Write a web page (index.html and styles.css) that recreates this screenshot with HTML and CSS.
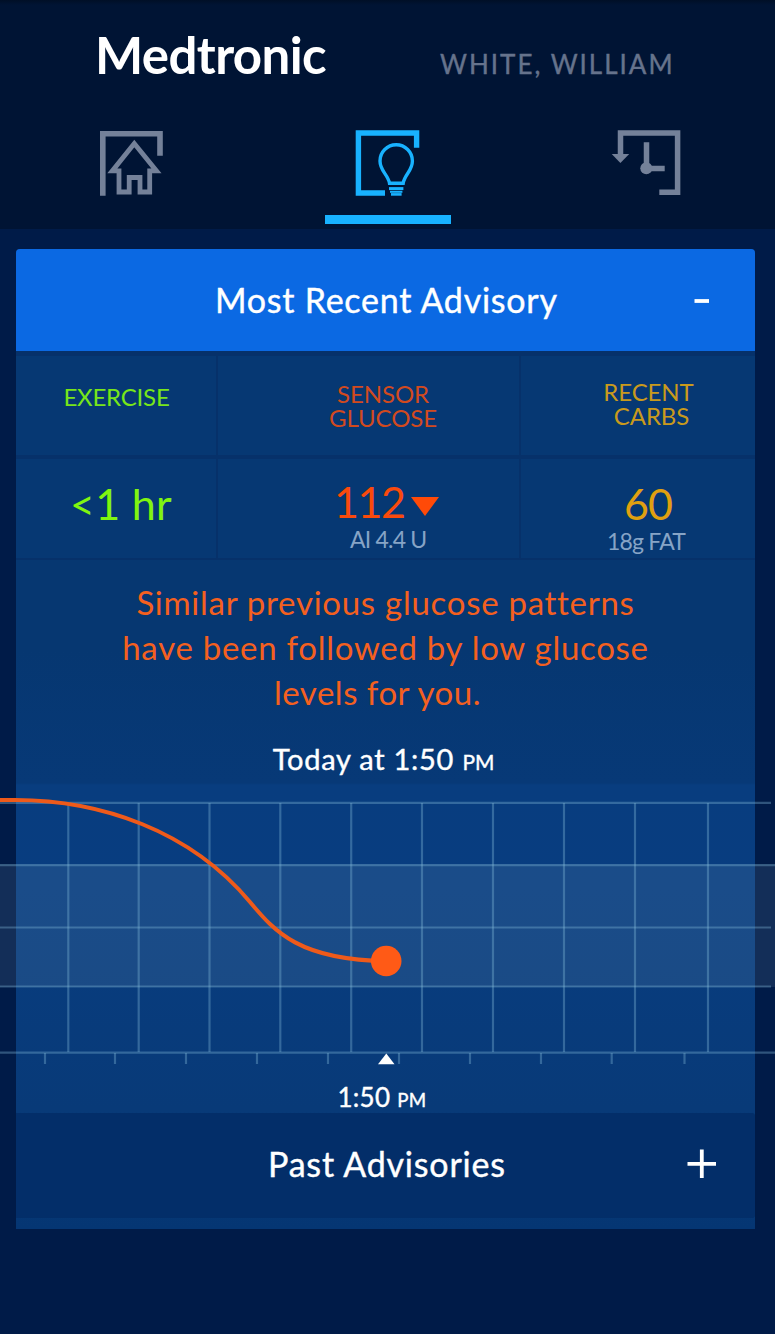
FILE: index.html
```html
<!DOCTYPE html>
<html lang="en">
<head>
<meta charset="utf-8">
<title>Medtronic – Most Recent Advisory</title>
<link rel="stylesheet" href="styles.css">
</head>
<body>
<header class="top">
  <div class="brand-row">
    <div class="brand"><span class="t">Medtronic</span></div>
    <div class="patient"><span class="t">WHITE, WILLIAM</span></div>
  </div>
  <nav class="tabs">
    <a class="tab tab-home">
      <svg width="66" height="70" viewBox="99 128 66 70" fill="none" stroke="currentColor">
        <path stroke-width="5.6" d="M102.8 195.7V133.7H160V155.7"/>
        <path stroke-width="4.8" d="M134.3 143.6L112.3 170.9H119V192H129.2V177.5H140V192H149.7V170.9H156.5Z"/>
      </svg>
    </a>
    <a class="tab tab-advice active">
      <svg width="68" height="70" viewBox="354 128 68 70" fill="none" stroke="currentColor">
        <path stroke-width="5.4" d="M416.6 147.7V133H358.4V193H385"/>
        <path stroke-width="3.4" d="M389.5 183.2C388 174.500 380 171 380 161A16.200 16.200 0 0 1 412.400 161C412.400 171 404.500 174.500 403.200 183.200Z"/>
        <path stroke-width="3" d="M389 188.600H403.400"/>
        <path stroke-width="2" d="M390 191.800H402.400"/>
        <path stroke-width="2.600" d="M391 194.400H401.600"/>
      </svg>
    </a>
    <a class="tab tab-history">
      <svg width="72" height="70" viewBox="611 128 72 70" fill="none" stroke="currentColor">
        <path stroke-width="5.5" d="M620.5 156V133.1H677.6V192.3H659.3M646.500 142.300V168.400H664.700"/>
        <path fill="currentColor" stroke="none" d="M611.700 154H629.200L620.400 163Z"/>
        <circle fill="currentColor" stroke="none" cx="646.300" cy="168.200" r="6"/>
      </svg>
    </a>
  </nav>
</header>

<main class="card">
  <section class="bar bar-open">
    <h1 class="bar-title"><span class="t">Most Recent Advisory</span></h1>
    <svg class="sign" width="30" height="30" viewBox="0 0 30 30"><path d="M8.500 16H23" stroke="#fff" stroke-width="3.800"/></svg>
  </section>

  <section class="stats">
    <div class="cell label green"><span class="t">EXERCISE</span></div>
    <div class="cell label red"><span class="t">SENSOR</span><span class="t glucose">GLUCOSE</span></div>
    <div class="cell label gold"><span class="t">RECENT</span><span class="t carbs">CARBS</span></div>
    <div class="cell value green"><div class="num hours"><span class="t">&lt;1 hr</span></div></div>
    <div class="cell value red">
      <div class="num level"><span class="t">112</span><svg width="28" height="19" viewBox="0 0 28 19"><path d="M0 0H28L14 19Z" fill="#ff4a08"/></svg></div>
      <div class="sub insulin"><span class="t">AI 4.4 U</span></div>
    </div>
    <div class="cell value gold">
      <div class="num grams"><span class="t">60</span></div>
      <div class="sub fat"><span class="t">18g FAT</span></div>
    </div>
  </section>

  <section class="message">
    <p class="advice"><span class="t">Similar previous glucose patterns</span><br><span class="t">have been followed by low glucose</span><br><span class="t last">levels for you.</span></p>
    <p class="when"><span class="t">Today at 1:50 <small>PM</small></span></p>
  </section>

  <section class="chart">
    <svg width="775" height="276" viewBox="0 790 775 276">
      <rect x="0" y="864.500" width="775" height="122.500" fill="#96b9c8" fill-opacity=".125"/>
      <g class="grid">
        <path d="M0 802.800H771M0 865.200H775M0 927.500H771M0 986.500H771M0 1052.600H775"/>
        <path d="M68.300 803V1052M138.700 803V1052M209.500 803V1052M280.300 803V1052M351.200 803V1052M422 803V1052M493 803V1052M564 803V1052M635 803V1052M708 803V1052"/>
        <path d="M45 1053V1064M115 1053V1064M186 1053V1064M257 1053V1064M328 1053V1064M399 1053V1064M470 1053V1064M541 1053V1064M611.700 1053V1064M684.500 1053V1064"/>
      </g>
      <path class="trend" d="M0 800H15C100 800 190 830 250 902C275 932 300 960 386 961"/>
      <circle cx="386.200" cy="961" r="15.300" fill="#ff5a16"/>
      <path d="M386.300 1053.500L394.500 1064.200H378Z" fill="#fff"/>
    </svg>
    <p class="axis"><span class="t">1:50 <small>PM</small></span></p>
  </section>

  <section class="bar bar-past">
    <h2 class="bar-title"><span class="t">Past Advisories</span></h2>
    <svg class="sign" width="30" height="30" viewBox="0 0 30 30"><path d="M.500 14.800H29M14.800 .500V29" stroke="#fff" stroke-width="3.800"/></svg>
  </section>
</main>
</body>
</html>
```
FILE: styles.css
```css
* { box-sizing: border-box; }
body {
  margin: 0;
  width: 775px;
  height: 1334px;
  overflow: hidden;
  background: #001b48;
  font-family: Lato, "Open Sans", sans-serif;
  color: #fff;
}
p, h1, h2 { margin: 0; font-weight: 400; }
svg { display: block; flex: none; }
.t { display: inline-block; white-space: nowrap; }

/* Header */
.top {
  height: 229px;
  padding-top: 25px;
  background: linear-gradient(#000f26 0, #001434 5px);
}
.brand-row { display: flex; align-items: baseline; height: 103px; padding-left: 95px; }
.brand { width: 345px; font-size: 51px; line-height: 60px; font-weight: 700; letter-spacing: -0.6px; }
.patient { font-size: 26px; letter-spacing: 2px; color: #66738c; -webkit-text-stroke: 0.4px #66738c; }
.tabs { display: grid; grid-template-columns: 325px 126px 1fr; height: 96px; }
.tab { color: #748199; }
.tab-home { padding-left: 99px; }
.tab-advice { padding-left: 29px; border-bottom: 9px solid #18b2ff; }
.tab-history { padding-left: 160px; }
.active { color: #18b2ff; }

/* Card */
.card {
  width: 739px;
  height: 980px;
  margin: 20px 0 0 16px;
  background: linear-gradient(#063771 0, #063771 400px, #073977 534px, #083d7f 536px, #083d80 640px, #083a78 860px, #053673 980px);
  border-radius: 4px 4px 0 0;
}
.bar { display: flex; align-items: center; }
.bar-title { font-size: 34px; line-height: 40px; -webkit-text-stroke: 0.4px #fff; }
.bar-open { height: 102px; padding-left: 199px; background: #0b69e3; border-radius: 4px 4px 0 0; }
.bar-open .bar-title { width: 471px; letter-spacing: 0.75px; }
.bar-past { height: 105px; padding-left: 252px; background: #032e69; border-radius: 0 3px 3px 0; }
.bar-past .bar-title { width: 419px; margin-top: -3px; letter-spacing: 0.8px; }
.bar-past .sign { margin-top: -4px; }

/* Readings */
.stats {
  display: grid;
  grid-template-columns: 200px 301px 234px;
  grid-template-rows: 99px 99px;
  gap: 4px 2px;
  height: 209px;
  padding-top: 5px;
  background: #06316a;
}
.cell { background: #063873; }
.label { display: flex; flex-direction: column; align-items: center; font-size: 24px; line-height: 24px; letter-spacing: -0.1px; }
.green { color: #78e619; }
.red { color: #d24a1e; }
.gold { color: #c99a1c; }
.label.green { padding: 29px 0 0 1px; letter-spacing: -0.2px; }
.label.red { padding: 26px 0 0 29px; }
.label.gold { padding: 24px 0 0 21px; }
.carbs { margin-left: 6px; }
.value.green { color: #80f510; }
.value.red { color: #fa4a0c; }
.value.gold { color: #e0a010; }
.num { display: flex; height: 68px; padding-top: 19px; font-size: 43px; line-height: 52px; }
.hours { padding-left: 54px; letter-spacing: 0.3px; }
.level { padding: 17px 0 0 116px; letter-spacing: -1.5px; }
.level svg { margin: 21px 0 0 7px; }
.grams { padding-left: 103px; letter-spacing: -1px; }
.sub { font-size: 23px; line-height: 24px; color: #86a4c6; letter-spacing: -0.8px; }
.insulin { padding-left: 132px; }
.fat { padding: 2px 0 0 86px; }

/* Message */
.message { height: 230px; text-align: center; }
.advice { padding-top: 20px; height: 182px; font-size: 33px; line-height: 45px; letter-spacing: 0.72px; color: #f4601f; }
.last { margin-right: 16px; letter-spacing: 0.5px; }
.when { font-size: 29px; line-height: 34px; padding-right: 4px; letter-spacing: 0.75px; -webkit-text-stroke: 0.4px #fff; }
small { font-size: 0.72em; }
.when small { letter-spacing: 0; }

/* Chart runs across the full screen width */
.chart { width: 775px; height: 323px; margin-left: -16px; }
.grid { fill: none; stroke: #82b9d7; stroke-opacity: .36; stroke-width: 2.2; }
.trend { fill: none; stroke: #ee5a1a; stroke-width: 4; }
.axis { padding-top: 15px; font-size: 26px; line-height: 32px; text-align: center; padding-right: 11px; letter-spacing: 0.3px; -webkit-text-stroke: 0.4px #fff; }
```
